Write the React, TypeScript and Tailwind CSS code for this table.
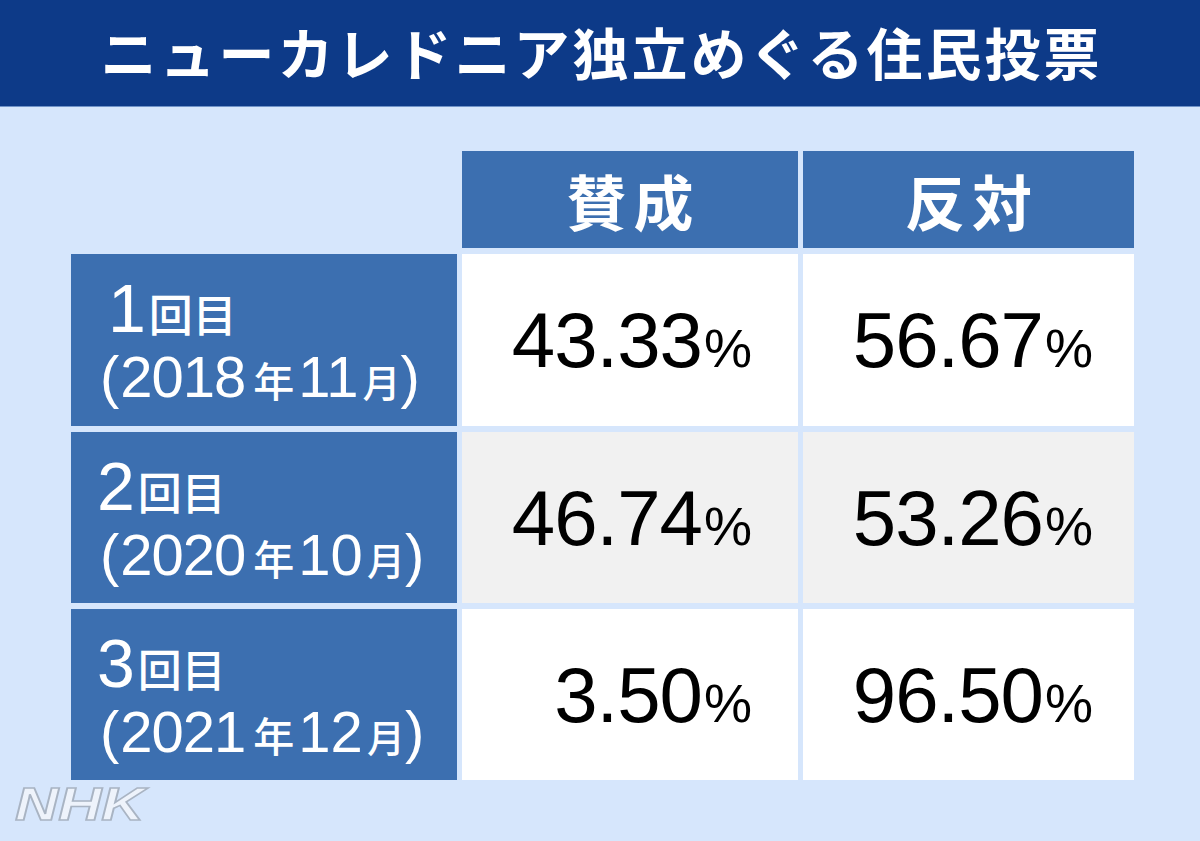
const rows = [
  { no: "1", year: "2018", month: "11", yes: "43.33", no2: "56.67", bg: "bg-white", indent: "ml-[11px]" },
  { no: "2", year: "2020", month: "10", yes: "46.74", no2: "53.26", bg: "bg-[#f1f1f1]", indent: "" },
  { no: "3", year: "2021", month: "12", yes: "3.50", no2: "96.50", bg: "bg-white", indent: "" },
];

const latin = "font-['Liberation_Sans','Noto_Sans_CJK_JP',sans-serif]";
const cjk = "font-['Noto_Sans_CJK_JP',sans-serif]";

const Value = ({ v, pr }: { v: string; pr: string }) => (
  <div className={`flex items-baseline leading-none text-black ${latin} ${pr}`}>
    <span className="text-[78px] tracking-[-1px]">{v}</span>
    <span className="text-[54px] ml-[2px]">%</span>
  </div>
);

const App = () => {
  return (
    <div className="w-[1200px] h-[841px] bg-[#d6e6fc] overflow-hidden">
      {/* Title */}
      <div className="h-[107px] bg-[#0d3a88] flex items-center justify-center border-b border-[#6f93c9]">
        <h1 className={`text-white text-[56px] font-bold tracking-[3px] pl-[3px] leading-none pb-[4px] ${cjk}`}>
          ニューカレドニア独立めぐる住民投票
        </h1>
      </div>

      {/* Table */}
      <div className="pt-[44px] pl-[71px]">
        <div className="grid grid-cols-[386px_336px_331px] grid-rows-[97px_172px_171px_171px] gap-x-[5px] gap-y-[6px]">
          <div />
          <div className="bg-[#3c6fb0] flex items-center justify-center">
            <span className={`text-white text-[60px] font-bold tracking-[7px] pl-[7px] leading-none ${cjk}`}>賛成</span>
          </div>
          <div className="bg-[#3c6fb0] flex items-center justify-center">
            <span className={`text-white text-[60px] font-bold tracking-[7px] pl-[7px] leading-none ${cjk}`}>反対</span>
          </div>

          {rows.map((r) => (
            <div key={r.no} className="contents">
              <div className="bg-[#3c6fb0] flex flex-col justify-center pl-[26px] text-white">
                <div className={`flex items-baseline leading-none h-[68px] ${r.indent}`}>
                  <span className={`text-[68px] leading-none ${latin}`}>{r.no}</span>
                  <span className={`text-[44px] leading-none font-medium ml-[3px] ${cjk}`}>回目</span>
                </div>
                <div className={`flex items-baseline leading-none h-[58px] mt-[6px] ${latin}`}>
                  <span className="text-[58px] leading-none ml-[3px] mr-[1px]">(</span>
                  <span className="text-[58px] leading-none tracking-[-1px]">{r.year}</span>
                  <span className={`text-[41px] leading-none font-medium ml-[8px] mr-[4px] ${cjk}`}>年</span>
                  <span className="text-[58px] leading-none">{r.month}</span>
                  <span className={`text-[38px] leading-none font-medium ml-[4px] ${cjk}`}>月</span>
                  <span className="text-[58px] leading-none">)</span>
                </div>
              </div>
              <div className={`${r.bg} flex items-center justify-end`}>
                <Value v={r.yes} pr="pr-[46px]" />
              </div>
              <div className={`${r.bg} flex items-center justify-end`}>
                <Value v={r.no2} pr="pr-[41px]" />
              </div>
            </div>
          ))}
        </div>
      </div>

      {/* Watermark */}
      <div className="pl-[15px] mt-[1px]">
        <span className="inline-block origin-left scale-x-[1.3] text-[46px] font-black italic leading-none text-[#eef3fb] [-webkit-text-stroke:1.5px_#a9b4c3] font-['Liberation_Sans',sans-serif]">
          NHK
        </span>
      </div>
    </div>
  );
};

export default App;
